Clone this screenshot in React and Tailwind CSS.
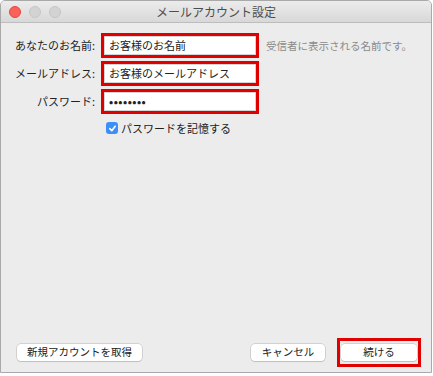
import React from 'react';

const font = { fontFamily: '"Noto Sans CJK JP", "Noto Sans", sans-serif' };

function Field({ label, value, password }) {
  return (
    <div className="flex items-center">
      <div className="w-[97px] pr-[3px] text-right text-[11px] text-[#222]">{label}</div>
      <div className="ml-[3px] h-[25px] w-[158px] border-[3px] border-[#e00000] bg-white">
        <div className="flex h-full items-center border border-[#d4d4d4] px-[4px] text-[11px] text-[#222]">
          {password ? <span className="text-[11px] font-bold tracking-[0.5px]">••••••••</span> : value}
        </div>
      </div>
    </div>
  );
}

function Button({ children, className }) {
  return (
    <button className={'flex h-[17px] items-center justify-center rounded-[4px] bg-white text-[10.5px] leading-none text-[#222] shadow-[0_0_0_0.5px_#b8b8b8,0_1px_1px_rgba(0,0,0,0.15)] ' + (className || '')}>
      {children}
    </button>
  );
}

export default function App() {
  return (
    <div className="h-[376px] w-[433px] bg-white" style={font}>
      <div className="flex h-[373px] w-[432px] flex-col overflow-hidden rounded-t-[5px] border border-[#a9a9a9] bg-[#ececec]">
        <div className="relative flex h-[22px] shrink-0 items-center justify-center border-b border-[#bdbdbd] bg-gradient-to-b from-[#ececec] to-[#d8d8d8]">
          <div className="absolute left-[8px] top-[5px] flex gap-[8px]">
            <div className="h-[12px] w-[12px] rounded-full border border-[#e2463f] bg-[#fc605b]" />
            <div className="h-[12px] w-[12px] rounded-full border border-[#c6c6c6] bg-[#d3d3d3]" />
            <div className="h-[12px] w-[12px] rounded-full border border-[#c6c6c6] bg-[#d3d3d3]" />
          </div>
          <span className="text-[12px] text-[#4d4d4d]">メールアカウント設定</span>
        </div>

        <div className="flex flex-1 flex-col pt-[10px]">
          <div className="flex flex-col gap-[3px]">
            <div className="flex items-center">
              <Field label="あなたのお名前:" value="お客様のお名前" />
              <span className="ml-[7px] whitespace-nowrap text-[10.5px] text-[#8a8a8a]">受信者に表示される名前です。</span>
            </div>
            <Field label="メールアドレス:" value="お客様のメールアドレス" />
            <Field label="パスワード:" password />
          </div>

          <div className="ml-[105px] mt-[6px] flex items-center gap-[3px]">
            <div className="flex h-[12px] w-[12px] items-center justify-center rounded-[3px] bg-[#3b8ff6]">
              <svg width="9" height="9" viewBox="0 0 10 10">
                <path d="M2 5.2 L4.2 7.5 L8 2.5" fill="none" stroke="white" strokeWidth="1.8" strokeLinecap="round" strokeLinejoin="round" />
              </svg>
            </div>
            <span className="text-[11px] text-[#222]">パスワードを記憶する</span>
          </div>

          <div className="mt-auto flex items-center pb-[5px] pl-[16px] pr-[10px]">
            <Button className="w-[125px]">新規アカウントを取得</Button>
            <Button className="ml-auto w-[74px]">キャンセル</Button>
            <div className="ml-[12px] border-[3px] border-[#e00000] px-[1px] py-[3px]">
              <Button className="w-[76px]">続ける</Button>
            </div>
          </div>
        </div>
      </div>
    </div>
  );
}
